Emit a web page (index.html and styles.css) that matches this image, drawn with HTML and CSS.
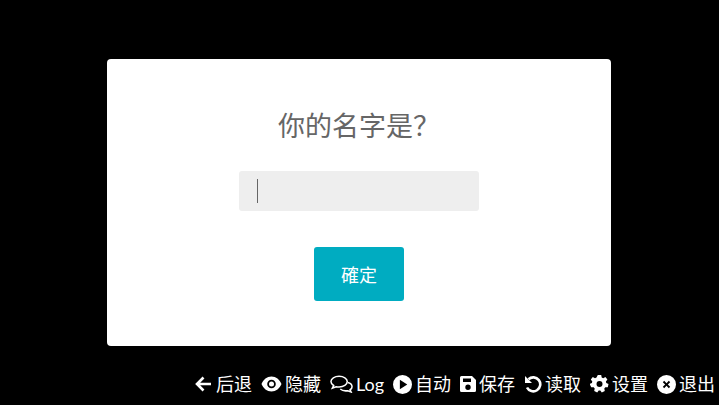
FILE: index.html
```html
<!DOCTYPE html>
<html lang="zh-CN">
<head>
    <meta charset="UTF-8">
    <meta name="viewport" content="width=device-width, initial-scale=1.0">
    <title>你的名字是？</title>
    <link rel="stylesheet" href="styles.css">
</head>

<body>
    <main class="stage">
        <div class="dialog">
            <h1>你的名字是？</h1>
            <div class="name-input"><span class="caret"></span></div>
            <button class="confirm">確定</button>
        </div>
    </main>

    <nav class="menu">
        <a>
            <svg class="back" viewBox="0 0 19 18"><path d="M17 9H3.500M9.500 2.500 3 9l6.500 6.500" fill="none" stroke="#fff" stroke-width="2.600"/></svg>
            后退
        </a>
        <a>
            <svg class="eye" viewBox="0 0 21 18"><path fill-rule="evenodd" fill="#fff" d="M10.500 1.500C6 1.500 2.300 4.500.5 9c1.800 4.500 5.500 7.500 10 7.500s8.200-3 10-7.500c-1.800-4.500-5.500-7.500-10-7.500Zm0 3.200a4.300 4.300 0 1 1 0 8.600 4.300 4.300 0 0 1 0-8.600Z"/><circle cx="10.500" cy="9" r="2.500" fill="#fff"/></svg>
            隐藏
        </a>
        <a>
            <svg class="chat" viewBox="0 0 24 18"><g fill="none" stroke="#fff" stroke-width="1.600"><path d="M9.500 1C4.800 1 1 3.300 1 6.500c0 1.700 1 3.100 2.800 4.100l-1.300 2.600 3.900-1.400c1 .2 2 .3 3.100.3 4.700 0 8.500-2.300 8.500-5.600S14.200 1 9.500 1Z"/><path d="M18.500 7.500c2.700.7 4.500 2.300 4.500 4.300 0 1.300-.7 2.400-2 3.200l1 2.300-3.500-1.300c-3 .5-6-.2-7.800-1.800"/></g></svg>
            Log
        </a>
        <a>
            <svg class="round" viewBox="0 0 18 18"><path fill-rule="evenodd" fill="#fff" d="M9 0a9 9 0 1 1 0 18A9 9 0 0 1 9 0ZM6.500 4.500v9l7-4.500Z"/></svg>
            自动
        </a>
        <a>
            <svg class="disk" viewBox="1 1 16 16"><path fill-rule="evenodd" fill="#fff" d="M2.500 1H13l4 4v10.500a1.500 1.500 0 0 1-1.500 1.500h-13A1.500 1.500 0 0 1 1 15.500v-13A1.500 1.500 0 0 1 2.500 1ZM4 3.500V7h8V3.500ZM9 9.500a2.700 2.700 0 1 0 0 5.400 2.700 2.700 0 0 0 0-5.400Z"/></svg>
            保存
        </a>
        <a>
            <svg viewBox="0 0 18 18"><path d="M4.500 4.200A7 7 0 1 1 3 12.500" fill="none" stroke="#fff" stroke-width="2.600"/><path fill="#fff" d="M1 1l7 7H1Z"/></svg>
            读取
        </a>
        <a>
            <svg class="gear" viewBox="0 0 18 18"><path fill-rule="evenodd" fill="#fff" d="m7.300 0h3.400l.5 2.500 1.500.7 2.200-1.300 2 2.500-1.500 2 .4 1.600 2.200 1-.7 3.200-2.500.1-1 1.300.5 2.500-3 1.400-1.500-2h-1.600l-1.500 2-3-1.400.5-2.500-1-1.300-2.500-.1L-.8 9l2.200-1 .4-1.600-1.500-2 2-2.500 2.200 1.300 1.500-.7ZM9 6a3 3 0 1 0 0 6 3 3 0 0 0 0-6Z"/></svg>
            设置
        </a>
        <a>
            <svg class="round" viewBox="0 0 18 18"><path fill-rule="evenodd" fill="#fff" d="M9 0a9 9 0 1 1 0 18A9 9 0 0 1 9 0ZM6.800 5.500 5.500 6.800 7.700 9l-2.200 2.200 1.300 1.300L9 10.300l2.200 2.200 1.300-1.300L10.300 9l2.200-2.200-1.300-1.300L9 7.700Z"/></svg>
            退出
        </a>
    </nav>
</body>

</html>
```

FILE: styles.css
```css
body {
    display: flex;
    flex-direction: column;
    height: 405px;
    margin: 0;
    overflow: hidden;
    background-color: #000;
    font-family: Lato, "Noto Sans CJK SC", sans-serif;
}

.stage {
    display: flex;
    flex: 1;
    align-items: flex-start;
    justify-content: center;
    padding: 59px 1px 0 0;
}

.dialog {
    display: flex;
    flex-direction: column;
    align-items: center;
    box-sizing: border-box;
    width: 504px;
    height: 287px;
    padding-top: 47px;
    background-color: #fff;
    border-radius: 4px;
}

h1 {
    margin: 0;
    color: #666;
    font-size: 27px;
    font-weight: 400;
    line-height: 40px;
}

.name-input {
    display: flex;
    align-items: center;
    box-sizing: border-box;
    width: 240px;
    height: 40px;
    margin-top: 25px;
    padding-left: 18px;
    background-color: #eee;
    border-radius: 3px;
}

.caret {
    width: 1px;
    height: 24px;
    background-color: #666;
}

.confirm {
    width: 90px;
    height: 54px;
    margin-top: 36px;
    padding: 0;
    color: #fff;
    background-color: #00acc1;
    border: none;
    border-radius: 3px;
    font-family: inherit;
    font-size: 18px;
}

.menu {
    display: flex;
    justify-content: flex-end;
    gap: 9px;
    height: 40px;
    padding-right: 4px;
    color: #fff;
    font-size: 18px;
    line-height: 38px;
}

.menu a {
    display: flex;
    align-items: center;
    gap: 3px;
    height: 38px;
}

.menu svg {
    width: 18px;
    height: 18px;
}

.menu .back {
    width: 19px;
}

.menu .eye {
    width: 21px;
}

.menu .chat {
    width: 23px;
}

.menu .round {
    width: 19px;
    height: 19px;
}

.menu .disk {
    width: 16px;
    height: 16px;
}

.menu .gear {
    width: 19px;
}
```
